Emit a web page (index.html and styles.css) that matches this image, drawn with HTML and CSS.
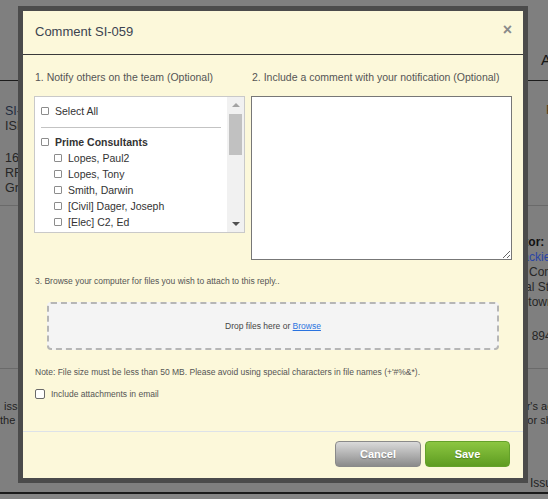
FILE: index.html
```html
<!DOCTYPE html>
<html lang="en">
<head>
<meta charset="utf-8">
<title>Comment SI-059</title>
<link rel="stylesheet" href="styles.css">
</head>
<body>
<div class="page">
  <div class="page-head"><span class="head-title">Activity</span></div>
  <div class="page-row row-1">
    <div class="col-left">
      <p class="line line-id">SI-059</p>
      <p class="line">ISI Request</p>
      <p class="line line-gap">16 May 2023</p>
      <p class="line">RFI-104</p>
      <p class="line">Greg Holt</p>
    </div>
    <div class="col-right">
      <p class="line status"><span class="status-key">Status:</span><span class="status-val">Pending</span></p>
    </div>
  </div>
  <div class="page-row row-2">
    <div class="col-left"></div>
    <div class="col-right contact">
      <p class="line strong">Contractor:</p>
      <p class="line link">Janet Blackie</p>
      <p class="line">Northern Consultants</p>
      <p class="line">12 Central Street</p>
      <p class="line">Elizabethtown</p>
      <p class="line line-phone">Ph: (555) 894-2210</p>
    </div>
  </div>
  <div class="page-row row-3">
    <div class="col-left">
      <p class="para para-left">issued to the team<br>the Contractor</p>
    </div>
    <div class="col-right">
      <p class="para">Contractor's action<br>as noted for sharing</p>
      <p class="para para-issued">Issued</p>
    </div>
  </div>
</div>

<div class="modal" role="dialog" aria-label="Comment SI-059">
  <div class="modal-header">
    <span class="modal-title">Comment SI-059</span>
    <span class="modal-close">&times;</span>
  </div>
  <div class="modal-body">
    <div class="cols">
      <div class="col-notify">
        <div class="label">1. Notify others on the team (Optional)</div>
        <div class="picker">
          <div class="picker-list">
            <label class="opt"><input type="checkbox" class="cb"><span>Select All</span></label>
            <div class="sep"></div>
            <label class="opt opt-group"><input type="checkbox" class="cb"><span>Prime Consultants</span></label>
            <label class="opt opt-sub"><input type="checkbox" class="cb"><span>Lopes, Paul2</span></label>
            <label class="opt opt-sub"><input type="checkbox" class="cb"><span>Lopes, Tony</span></label>
            <label class="opt opt-sub"><input type="checkbox" class="cb"><span>Smith, Darwin</span></label>
            <label class="opt opt-sub"><input type="checkbox" class="cb"><span>[Civil] Dager, Joseph</span></label>
            <label class="opt opt-sub"><input type="checkbox" class="cb"><span>[Elec] C2, Ed</span></label>
          </div>
          <div class="scrollbar">
            <div class="sb-btn"><span class="arrow-up"></span></div>
            <div class="sb-track"><div class="sb-thumb"></div></div>
            <div class="sb-btn"><span class="arrow-down"></span></div>
          </div>
        </div>
      </div>
      <div class="col-comment">
        <div class="label">2. Include a comment with your notification (Optional)</div>
        <textarea class="comment"></textarea>
      </div>
    </div>
    <div class="attach-label">3. Browse your computer for files you wish to attach to this reply..</div>
    <div class="dropzone">Drop files here or&nbsp;<a class="browse" href="#">Browse</a></div>
    <div class="note">Note: File size must be less than 50 MB. Please avoid using special characters in file names (+'#%&amp;*).</div>
    <label class="include"><input type="checkbox" class="cb cb-lg"><span>Include attachments in email</span></label>
  </div>
  <div class="modal-footer">
    <button class="btn btn-cancel" type="button">Cancel</button>
    <button class="btn btn-save" type="button">Save</button>
  </div>
</div>
</body>
</html>
```

FILE: styles.css
```css
html, body {
  margin: 0;
  padding: 0;
  width: 548px;
  height: 499px;
  overflow: hidden;
}
body {
  position: relative;
  background: #858585;
  font-family: "Liberation Sans", Arial, sans-serif;
}
p { margin: 0; }

/* ---------- dimmed page behind the dialog ---------- */
.page {
  width: 548px;
  overflow: hidden;
  background: #7f7f7f;
  color: #1b1b1b;
}
.page-head {
  height: 80px;
  border-bottom: 1px solid #1c1c1c;
  display: flex;
  align-items: flex-end;
}
.head-title {
  margin: 0 0 11px 541px;
  font-size: 15px;
  line-height: 18px;
  white-space: nowrap;
  color: #161616;
}
.page-row {
  display: flex;
  border-bottom: 1px solid #6a6a6a;
}
.row-1 { height: 124px; }
.row-2 { height: 162px; }
.row-3 {
  height: 123px;
  border-bottom: 2px solid #1a1a1a;
}
.col-left {
  width: 479px;
  flex: none;
  box-sizing: border-box;
  padding-left: 5px;
}
.col-right {
  flex: 1;
  min-width: 0;
  white-space: nowrap;
}
.line {
  font-size: 12.5px;
  line-height: 15px;
  white-space: nowrap;
  color: #262626;
}
.row-1 .col-left { padding-top: 23px; }
.line-id { color: #1f2c3f; }
.line-gap { margin-top: 17px; }
.status { padding-top: 22px; display: flex; }
.status-key { width: 67px; flex: none; font-weight: bold; }
.status-val { color: #5a4016; }

.contact { padding-top: 29px; }
.contact .line { font-size: 12px; }
.strong { font-weight: bold; color: #111; }
.link { color: #2a45a6; }
.line-phone { margin-top: 19px; }

.para {
  font-size: 11px;
  line-height: 14px;
  white-space: nowrap;
  color: #1f1f1f;
}
.row-3 .col-left { padding-left: 0; }
.row-3 .para { margin-top: 30px; }
.para-left { text-indent: 4px; }
.row-3 .para-issued {
  margin-top: 49px;
  padding-left: 51px;
  font-size: 12px;
}

/* ---------- dialog ---------- */
.modal {
  position: absolute;
  top: 6px;
  left: 18px;
  width: 510px;
  height: 477px;
  box-sizing: border-box;
  border: 5px solid #4b4b4b;
  background: #fcf8da;
  display: flex;
  flex-direction: column;
  color: #444;
}
.modal-header {
  height: 41px;
  flex: none;
  border-bottom: 1px solid #3a3a3a;
  display: flex;
  align-items: center;
  justify-content: space-between;
  padding: 0 11px 2px 12px;
}
.modal-title {
  font-size: 13px;
  color: #3b4350;
}
.modal-close {
  font-size: 16px;
  font-weight: bold;
  color: #8a8a8a;
  line-height: 16px;
  margin-top: -3px;
}
.modal-body {
  padding: 16px 11px 0 11px;
}
.cols {
  display: flex;
  gap: 6px;
}
.col-notify { width: 211px; flex: none; }
.col-comment { width: 261px; flex: none; }
.label {
  font-size: 10.5px;
  line-height: 12px;
  color: #555;
  white-space: nowrap;
  margin-bottom: 13px;
  padding-left: 1px;
}

.picker {
  height: 137px;
  box-sizing: border-box;
  border: 1px solid #c9c9c9;
  background: #fff;
  display: flex;
}
.picker-list {
  flex: 1;
  overflow: hidden;
  padding: 6px 0 0 6px;
}
.opt {
  display: flex;
  align-items: center;
  gap: 6px;
  height: 16px;
  font-size: 10.5px;
  color: #333;
  white-space: nowrap;
}
.opt-group { font-weight: bold; }
.opt-sub { padding-left: 13px; }
.sep {
  width: 180px;
  height: 1px;
  background: #c3c3c3;
  margin: 8px 0 6px;
}
.cb {
  appearance: none;
  -webkit-appearance: none;
  width: 8px;
  height: 8px;
  margin: 0;
  box-sizing: border-box;
  border: 1px solid #8c8c8c;
  border-radius: 1px;
  background: #fff;
  flex: none;
}
.cb-lg {
  width: 10px;
  height: 10px;
  border-color: #6a6a6a;
  border-radius: 2px;
}

.scrollbar {
  width: 17px;
  flex: none;
  background: #f1f1f1;
  display: flex;
  flex-direction: column;
}
.sb-btn {
  height: 16px;
  flex: none;
  display: flex;
  align-items: center;
  justify-content: center;
}
.arrow-up {
  width: 0;
  height: 0;
  border-left: 4px solid transparent;
  border-right: 4px solid transparent;
  border-bottom: 4px solid #a3a3a3;
}
.arrow-down {
  width: 0;
  height: 0;
  border-left: 4px solid transparent;
  border-right: 4px solid transparent;
  border-top: 4px solid #505050;
}
.sb-track { flex: 1; }
.sb-thumb {
  height: 41px;
  margin: 1px 2px 0;
  background: #c1c1c1;
}

.comment {
  display: block;
  width: 261px;
  height: 164px;
  box-sizing: border-box;
  margin: 0;
  border: 1px solid #777;
  background: #fff;
  resize: both;
  font-family: inherit;
}

.attach-label {
  margin-top: 16px;
  padding-left: 1px;
  font-size: 8.5px;
  line-height: 10px;
  color: #555;
  white-space: nowrap;
}
.dropzone {
  margin: 16px 13px 0 13px;
  height: 48px;
  box-sizing: border-box;
  border: 2px dashed #b6b6b6;
  border-radius: 4px;
  background: #f4f4f4;
  display: flex;
  align-items: center;
  justify-content: center;
  font-size: 8.5px;
  color: #444;
}
.browse {
  color: #2a73e0;
  text-decoration: underline;
}
.note {
  margin-top: 17px;
  padding-left: 1px;
  font-size: 8.5px;
  line-height: 10px;
  color: #555;
  white-space: nowrap;
}
.include {
  margin-top: 12px;
  padding-left: 1px;
  height: 10px;
  display: flex;
  align-items: center;
  gap: 6px;
  font-size: 8.5px;
  color: #555;
}

.modal-footer {
  margin-top: auto;
  border-top: 1px solid #dde2e8;
  padding: 9px 13px 11px;
  display: flex;
  justify-content: flex-end;
  gap: 4px;
}
.btn {
  height: 26px;
  box-sizing: border-box;
  border-radius: 4px;
  font-family: inherit;
  font-size: 11px;
  font-weight: bold;
  color: #fff;
  text-shadow: 0 1px 1px rgba(0, 0, 0, 0.25);
  padding: 0;
}
.btn-cancel {
  width: 86px;
  border: 1px solid #8a8a8a;
  background: linear-gradient(#dadada, #8b8b8b);
}
.btn-save {
  width: 85px;
  border: 1px solid #64a12a;
  background: linear-gradient(#8cc641, #5e9c21);
}
```
